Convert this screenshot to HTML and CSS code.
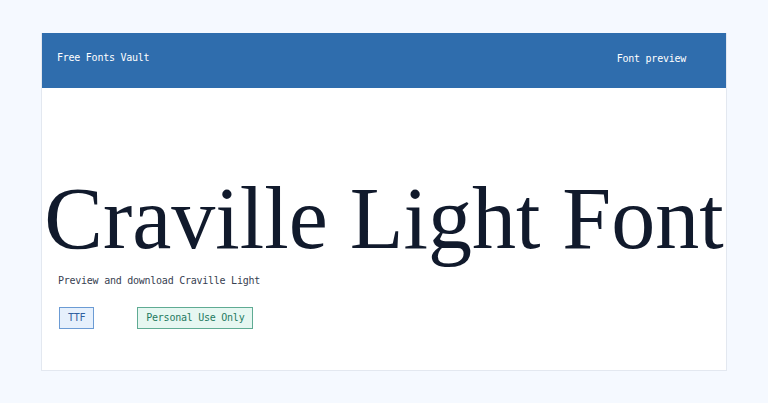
FILE: index.html
```html
<!DOCTYPE html>
<html lang="en">
  <head>
    <meta charset="UTF-8" />
    <meta name="viewport" content="width=device-width, initial-scale=1.0" />
    <title>Craville Light Font</title>
    <link rel="stylesheet" href="styles.css">
  </head>
  <body>
    <div class="card">
      <div class="header">
        <a href="#" class="brand">Free Fonts Vault</a>
        <span class="nav-label">Font preview</span>
      </div>

      <div class="preview">
        <h1 class="sample">Craville Light Font</h1>
        <p class="intro">Preview and download Craville Light</p>
        <div class="tags">
          <span class="tag tag-format">TTF</span>
          <span class="tag tag-license">Personal Use Only</span>
        </div>
      </div>
    </div>
  </body>
</html>
```

FILE: styles.css
```css
body {
  font-family: "DejaVu Sans Mono", "Liberation Mono", monospace;
  font-size: 10px;
  letter-spacing: -0.25px;
  background-color: #f5f9ff;
  margin: 0;
  padding: 33px 41px;
}

.card {
  background-color: #fff;
  border: 1px solid #e3e8f0;
  border-top: none;
}

.header {
  background-color: #2f6dad;
  height: 55px;
  box-sizing: border-box;
  padding: 19px 40px 0 15px;
  display: flex;
  justify-content: space-between;
  align-items: flex-start;
}

.brand {
  color: #fff;
  text-decoration: none;
}

.nav-label {
  color: #fff;
  padding-top: 1px;
}

.preview {
  padding: 0 0 41px 16px;
}

.sample {
  font-family: "Liberation Serif", "Times New Roman", serif;
  font-weight: normal;
  font-size: 88px;
  letter-spacing: 0;
  color: #111a2c;
  text-align: center;
  margin: 81px 0 0 -16px;
  line-height: 100px;
  white-space: nowrap;
}

.intro {
  color: #374151;
  line-height: 12px;
  margin: 6px 0 0;
}

.tags {
  display: flex;
  gap: 43px;
  margin: 20px 0 0 1px;
}

.tag {
  padding: 4px 8px;
  line-height: 12px;
}

.tag-format {
  background-color: #e6f0fc;
  border: 1px solid #6b9bd4;
  color: #2f5f9f;
}

.tag-license {
  background-color: #e6f7f1;
  border: 1px solid #5fab93;
  color: #1f7a5f;
}
```
